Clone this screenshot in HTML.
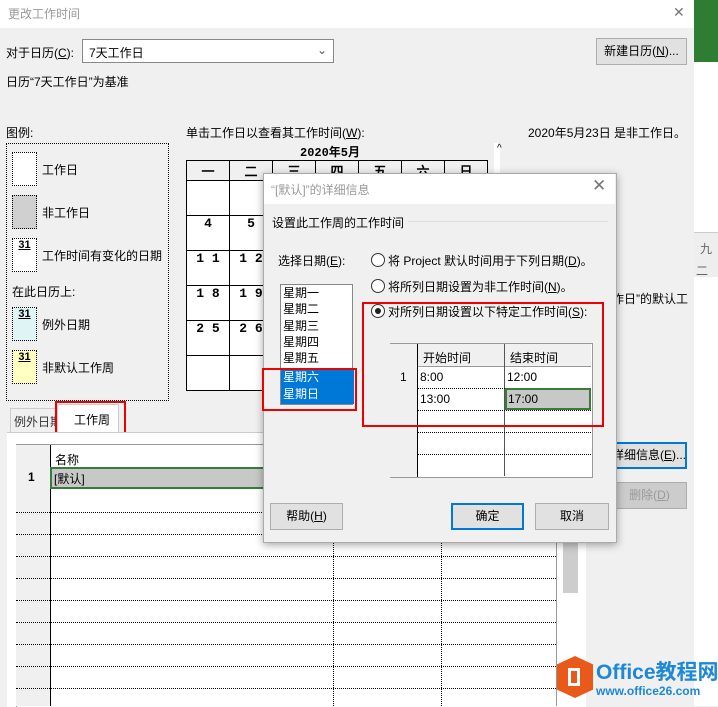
<html><head><style>
body{margin:0;width:718px;height:706px;overflow:hidden;background:#f0f0f0;font-family:"Liberation Sans","Noto Sans CJK SC",sans-serif;font-size:12px;color:#000;position:relative}
.a{position:absolute;white-space:nowrap}
.btn{position:absolute;background:#e1e1e1;border:1px solid #adadad;text-align:center;box-sizing:border-box;white-space:nowrap;overflow:hidden}
.cal td{border:1px solid #000;width:42px;height:35px;vertical-align:top;text-align:center;font-weight:bold;font-family:"Liberation Mono",monospace;font-size:13px;padding:0}
.cal{border-collapse:collapse;position:absolute;left:186px;top:160px;background:#fff}
.hl{position:absolute;left:16px;width:540px;border-top:1px dotted #000}
</style></head><body>
<div class="a" style="left:0;top:0;width:694px;height:28px;background:#fff"></div>
<div class="a" style="left:8px;top:5px;color:#999">更改工作时间</div>
<div class="a" style="left:673px;top:4px;font-size:14px;color:#777">✕</div>
<div class="a" style="left:694px;top:0;width:24px;height:62px;background:#2e7d32"></div>
<div class="a" style="left:694px;top:62px;width:24px;height:644px;background:#fff"></div>
<div class="a" style="left:694px;top:232px;width:24px;height:44px;background:#eee;border-top:1px solid #ccc"></div>
<div class="a" style="left:700px;top:240px;color:#666">九</div>
<div class="a" style="left:696px;top:262px;color:#666">二</div>

<div class="a" style="left:6px;top:44px">对于日历(<u>C</u>):</div>
<div class="a" style="left:82px;top:39px;width:252px;height:24px;background:#fff;border:1px solid #888;box-sizing:border-box"><span style="position:absolute;left:6px;top:4px">7天工作日</span><span style="position:absolute;right:6px;top:3px;color:#555">⌄</span></div>
<div class="btn" style="left:596px;top:38px;width:91px;height:27px;line-height:25px">新建日历(<u>N</u>)...</div>
<div class="a" style="left:6px;top:73px">日历“7天工作日”为基准</div>
<div class="a" style="left:6px;top:124px">图例:</div>
<div class="a" style="left:186px;top:124px">单击工作日以查看其工作时间(<u>W</u>):</div>
<div class="a" style="left:528px;top:124px">2020年5月23日 是非工作日。</div>
<div class="a" style="left:6px;top:143px;width:161px;height:256px;border:1px dotted #000"></div>
<div class="a" style="left:12px;top:152px;width:23px;height:32px;background:#fff;border:1px dotted #000"></div><div class="a" style="left:42px;top:161px">工作日</div>
<div class="a" style="left:12px;top:195px;width:23px;height:32px;background:#d0d0d0;border:1px dotted #000"></div><div class="a" style="left:42px;top:204px">非工作日</div>
<div class="a" style="left:12px;top:238px;width:23px;height:32px;background:#fff;border:1px dotted #000;font-weight:bold;font-size:11px;text-align:center"><u>31</u></div><div class="a" style="left:42px;top:247px">工作时间有变化的日期</div>
<div class="a" style="left:12px;top:283px">在此日历上:</div>
<div class="a" style="left:12px;top:307px;width:23px;height:32px;background:#dff5f5;border:1px dotted #000;font-weight:bold;font-size:11px;text-align:center"><u>31</u></div><div class="a" style="left:42px;top:316px">例外日期</div>
<div class="a" style="left:12px;top:350px;width:23px;height:32px;background:#ffffc0;border:1px dotted #000;font-weight:bold;font-size:11px;text-align:center"><u>31</u></div><div class="a" style="left:42px;top:359px">非默认工作周</div>
<div class="a" style="left:300px;top:143px;font-weight:bold;font-family:'Liberation Mono','Noto Sans CJK SC',monospace">2020年5月</div>
<table class="cal"><tr style="height:17px"><td style="height:17px;background:#f0f0f0">一</td><td style="height:17px;background:#f0f0f0">二</td><td style="height:17px;background:#f0f0f0">三</td><td style="height:17px;background:#f0f0f0">四</td><td style="height:17px;background:#f0f0f0">五</td><td style="height:17px;background:#f0f0f0">六</td><td style="height:17px;background:#f0f0f0">日</td></tr>
<tr><td></td><td></td><td></td><td></td><td></td><td></td><td></td></tr>
<tr><td>4</td><td>5</td><td></td><td></td><td></td><td></td><td></td></tr>
<tr><td>1 1</td><td>1 2</td><td></td><td></td><td></td><td></td><td></td></tr>
<tr><td>1 8</td><td>1 9</td><td></td><td></td><td></td><td></td><td></td></tr>
<tr><td>2 5</td><td>2 6</td><td></td><td></td><td></td><td></td><td></td></tr>
<tr><td></td><td></td><td></td><td></td><td></td><td></td><td></td></tr></table>
<div class="a" style="left:494px;top:143px;width:6px;height:250px;background:#fff"></div>
<div class="a" style="left:497px;top:143px;font-size:10px">^</div>
<div class="a" style="left:612px;top:290px">作日”的默认工</div>

<div class="a" style="left:10px;top:408px;width:47px;height:24px;border:1px solid #ccc;border-bottom:none"></div>
<div class="a" style="left:14px;top:413px;color:#333">例外日期</div>
<div class="a" style="left:57px;top:404px;width:60px;height:28px;background:#fff;border:1px solid #ccc;border-bottom:none"></div>
<div class="a" style="left:74px;top:411px">工作周</div>
<div class="a" style="left:55px;top:401px;width:71px;height:40px;border:2px solid #e00;box-sizing:border-box"></div>
<div class="a" style="left:7px;top:432px;width:579px;height:274px;background:#fff;border-top:1px solid #ccc"></div>
<div class="a" style="left:16px;top:444px;width:540px;height:262px;border-top:1px solid #999;border-left:1px solid #999;background:#fff"></div>
<div class="a" style="left:16px;top:445px;width:34px;height:261px;background:#f0f0f0;border-right:1px solid #000"></div>
<div class="a" style="left:55px;top:451px">名称</div>
<div class="a" style="left:50px;top:467px;width:540px;height:22px;background:#c8c8c8;border:2px solid #3a7a3a;box-sizing:border-box"></div>
<div class="a" style="left:54px;top:470px">[默认]</div>
<div class="a" style="left:28px;top:470px;font-weight:bold">1</div>
<div class="hl" style="top:512px"></div><div class="hl" style="top:534px"></div><div class="hl" style="top:556px"></div><div class="hl" style="top:578px"></div><div class="hl" style="top:600px"></div><div class="hl" style="top:622px"></div><div class="hl" style="top:644px"></div><div class="hl" style="top:666px"></div><div class="hl" style="top:688px"></div>
<div class="a" style="left:333px;top:541px;height:165px;border-left:1px dotted #000"></div>
<div class="a" style="left:441px;top:541px;height:165px;border-left:1px dotted #000"></div>
<div class="a" style="left:556px;top:444px;height:262px;border-left:1px solid #999"></div>
<div class="a" style="left:563px;top:541px;width:15px;height:52px;background:#cdcdcd"></div>
<div class="btn" style="left:610px;top:442px;width:77px;height:27px;border:2px solid #0078d7;line-height:23px;text-align:right;padding-right:3px">详细信息(<u>E</u>)...</div>
<div class="btn" style="left:612px;top:482px;width:75px;height:27px;line-height:25px;color:#999;background:#ccc">删除(<u>D</u>)</div>

<div class="a" style="left:263px;top:173px;width:352px;height:368px;background:#f0f0f0;border:1px solid #aaa;box-shadow:0 2px 8px rgba(0,0,0,.35)"></div>
<div class="a" style="left:264px;top:174px;width:351px;height:30px;background:#fff"></div>
<div class="a" style="left:271px;top:181px;color:#999">“[默认]”的详细信息</div>
<div class="a" style="left:592px;top:176px;font-size:17px;color:#777">✕</div>
<div class="a" style="left:272px;top:214px">设置此工作周的工作时间</div>
<div class="a" style="left:408px;top:221px;width:200px;border-top:1px solid #ddd"></div>
<div class="a" style="left:278px;top:252px">选择日期(<u>E</u>):</div>
<div class="a" style="left:280px;top:284px;width:73px;height:121px;background:#fff;border:1px solid #888;line-height:16.3px;padding-left:2px;box-sizing:border-box">星期一<br>星期二<br>星期三<br>星期四<br>星期五</div>
<div class="a" style="left:281px;top:369px;width:71px;height:35px;background:#0078d7;color:#fff;line-height:17px;padding-left:2px">星期六<br>星期日</div>
<div class="a" style="left:262px;top:368px;width:95px;height:43px;border:2px solid #e00;box-sizing:border-box"></div>
<div class="a" style="left:371px;top:253px;width:12px;height:12px;border:1px solid #333;border-radius:50%;background:#fff"></div>
<div class="a" style="left:388px;top:252px">将 Project 默认时间用于下列日期(<u>D</u>)。</div>
<div class="a" style="left:371px;top:279px;width:12px;height:12px;border:1px solid #333;border-radius:50%;background:#fff"></div>
<div class="a" style="left:388px;top:278px">将所列日期设置为非工作时间(<u>N</u>)。</div>
<div class="a" style="left:371px;top:304px;width:12px;height:12px;border:1px solid #333;border-radius:50%;background:#fff"></div>
<div class="a" style="left:375px;top:308px;width:6px;height:6px;border-radius:50%;background:#222"></div>
<div class="a" style="left:388px;top:303px">对所列日期设置以下特定工作时间(<u>S</u>):</div>
<div class="a" style="left:390px;top:343px;width:201px;height:133px;background:#fff;border:1px solid #999"></div>
<div class="a" style="left:390px;top:344px;width:27px;height:133px;background:#f0f0f0;border-right:1px solid #000"></div>
<div class="a" style="left:418px;top:344px;width:173px;height:22px;background:#f0f0f0;border-bottom:1px solid #999"></div>
<div class="a" style="left:504px;top:344px;height:132px;border-left:1px solid #555"></div>
<div class="a" style="left:423px;top:349px">开始时间</div><div class="a" style="left:510px;top:349px">结束时间</div>
<div class="a" style="left:400px;top:370px">1</div><div class="a" style="left:420px;top:370px">8:00</div><div class="a" style="left:507px;top:370px">12:00</div>
<div class="a" style="left:418px;top:388px;width:173px;border-top:1px dotted #000"></div>
<div class="a" style="left:505px;top:388px;width:86px;height:22px;background:#c8c8c8;border:2px solid #3a7a3a;box-sizing:border-box"></div>
<div class="a" style="left:420px;top:392px">13:00</div><div class="a" style="left:508px;top:392px">17:00</div>
<div class="a" style="left:418px;top:410px;width:173px;border-top:1px dotted #000"></div>
<div class="a" style="left:418px;top:432px;width:173px;border-top:1px dotted #000"></div>
<div class="a" style="left:418px;top:454px;width:173px;border-top:1px dotted #000"></div>
<div class="a" style="left:362px;top:302px;width:242px;height:125px;border:2px solid #e00;box-sizing:border-box"></div>
<div class="btn" style="left:270px;top:503px;width:73px;height:27px;line-height:25px">帮助(<u>H</u>)</div>
<div class="btn" style="left:451px;top:503px;width:73px;height:27px;line-height:23px;border:2px solid #0078d7">确定</div>
<div class="btn" style="left:535px;top:503px;width:74px;height:27px;line-height:25px">取消</div>

<div class="a" style="left:557px;top:656px;width:36px;height:42px;background:#e8591a;clip-path:polygon(50% 0,100% 20%,100% 80%,50% 100%,0 80%,0 20%)"></div>
<div class="a" style="left:568px;top:668px;width:12px;height:18px;border:3px solid #fff;box-sizing:border-box"></div>
<div class="a" style="left:596px;top:656px;font-size:21px;font-weight:bold;color:#1e88d8">Office教程网</div>
<div class="a" style="left:596px;top:684px;font-size:12px;font-weight:bold;color:#1e88d8">www.office26.com</div>
</body></html>
